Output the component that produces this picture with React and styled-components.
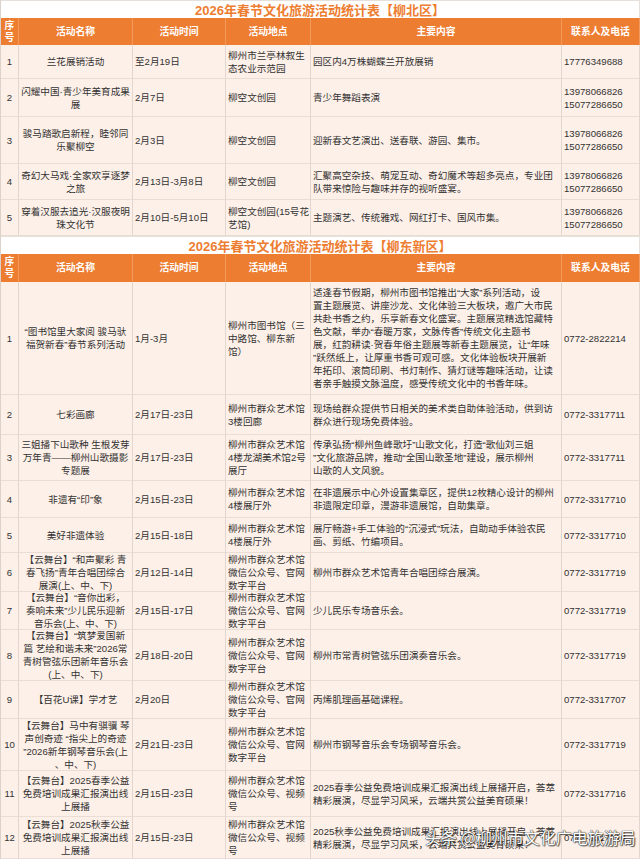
import React from 'react'
import styled, { createGlobalStyle } from 'styled-components'

const GlobalStyle = createGlobalStyle`
    body {
        margin: 0;
        background: #ffffff;
        font-family: "Liberation Sans", "Noto Sans CJK SC", sans-serif;
    }
`

const Page = styled.div`
    position: relative;
    width: 640px;
    height: 860px;
    overflow: hidden;
    background: #ffffff;
`

const Sheet = styled.div`
    display: grid;
    grid-template-columns: 18px 114px 93px 85px 251px 78px;
    width: 640px;
    border-left: 1px solid #ddd2ca;
    box-sizing: border-box;
`

const Title = styled.div`
    grid-column: 1 / -1;
    height: ${p => p.h}px;
    display: flex;
    align-items: center;
    justify-content: center;
    background: #ffffff;
    border-top: 1px solid #e6e0dc;
    border-right: 1px solid #e6e0dc;
    box-sizing: border-box;
    color: #ed7d31;
    font-family: "Liberation Sans", "Noto Sans CJK SC", sans-serif;
    font-size: 13px;
    font-weight: 700;
`

const Head = styled.div`
    height: ${p => p.h}px;
    display: flex;
    align-items: center;
    justify-content: center;
    text-align: center;
    white-space: pre;
    background: #ed7d31;
    color: #ffffff;
    font-size: 9.8px;
    font-weight: 700;
    line-height: 12px;
    border-right: 1px solid #f29a5c;
    box-sizing: border-box;
    &:last-child {
        border-right: none;
    }
`

const Cell = styled.div`
    height: ${p => p.h}px;
    display: flex;
    align-items: center;
    justify-content: ${p => (p.center ? 'center' : 'flex-start')};
    text-align: ${p => (p.center ? 'center' : 'left')};
    padding: 0 ${p => (p.center ? 0 : 1)}px 0 ${p => (p.center ? 0 : 2)}px;
    background: #fdf0e8;
    color: #333333;
    font-size: 9.6px;
    line-height: 13px;
    white-space: pre;
    border-right: 1px solid #e2d6ce;
    border-bottom: 1px solid #eaddd4;
    box-sizing: border-box;
`

const Watermark = styled.div`
    position: absolute;
    left: 425px;
    top: 827px;
    color: #ffffff;
    font-family: "Noto Sans CJK SC", sans-serif;
    font-size: 16px;
    line-height: 20px;
    white-space: nowrap;
    text-shadow: 0 0 1px #222, 0 0 1px #222, 1px 1px 1px rgba(0, 0, 0, 0.6);
`

const heads = ['序\n号', '活动名称', '活动时间', '活动地点', '主要内容', '联系人及电话']

const liubei = [
    [34, '1', '兰花展销活动', '至2月19日', '柳州市兰亭林叙生\n态农业示范园', '园区内4万株蝴蝶兰开放展销', '17776349688'],
    [38, '2', '闪耀中国·青少年美育成果\n展', '2月7日', '柳空文创园', '青少年舞蹈表演', '13978066826\n15077286650'],
    [47, '3', '骏马踏歌启新程，睦邻同\n乐聚柳空', '2月3日', '柳空文创园', '迎新春文艺演出、送春联、游园、集市。', '13978066826\n15077286650'],
    [36, '4', '奇幻大马戏·全家欢享逐梦\n之旅', '2月13日-3月8日', '柳空文创园', '汇聚高空杂技、萌宠互动、奇幻魔术等超多亮点，专业团\n队带来惊险与趣味并存的视听盛宴。', '13978066826\n15077286650'],
    [36, '5', '穿着汉服去追光·汉服夜明\n珠文化节', '2月10日-5月10日', '柳空文创园(15号花\n艺馆)', '主题演艺、传统雅戏、网红打卡、国风市集。', '13978066826\n15077286650'],
]

const qunyi = '柳州市群众艺术馆\n微信公众号、官网\n数字平台'
const qunyiVideo = '柳州市群众艺术馆\n微信公众号、视频\n号'

const liudong = [
    [113, '1', '“图书馆里大家阅 骏马驮\n福贺新春”春节系列活动', '1月-3月', '柳州市图书馆（三\n中路馆、柳东新\n馆）',
        '适逢春节假期，柳州市图书馆推出“大家”系列活动，设\n置主题展览、讲座沙龙、文化体验三大板块，邀广大市民\n共赴书香之约，乐享新春文化盛宴。主题展览精选馆藏特\n色文献，举办“春暖万家，文脉传香”传统文化主题书\n展，红韵耕读·贺春年俗主题展等新春主题展览，让“年味\n”跃然纸上，让厚重书香可观可感。文化体验板块开展新\n年拓印、滚筒印刷、书灯制作、猜灯谜等趣味活动，让读\n者亲手触摸文脉温度，感受传统文化中的书香年味。', '0772-2822214'],
    [40, '2', '七彩画廊', '2月17日-23日', '柳州市群众艺术馆\n3楼回廊', '现场给群众提供节日相关的美术类自助体验活动，供到访\n群众进行现场免费体验。', '0772-3317711'],
    [46, '3', '三姐播下山歌种 生根发芽\n万年青——柳州山歌摄影\n专题展', '2月17日-23日', '柳州市群众艺术馆\n4楼龙湖美术馆2号\n展厅', '传承弘扬“柳州鱼峰歌圩”山歌文化，打造“歌仙刘三姐\n”文化旅游品牌，推动“全国山歌圣地”建设，展示柳州\n山歌的人文风貌。', '0772-3317711'],
    [37, '4', '非遗有“印”象', '2月15日-23日', '柳州市群众艺术馆\n4楼展厅外', '在非遗展示中心外设置集章区，提供12枚精心设计的柳州\n非遗限定印章，漫游非遗展馆，自助集章。', '0772-3317710'],
    [35, '5', '美好非遗体验', '2月15日-18日', '柳州市群众艺术馆\n4楼展厅外', '展厅畅游+手工体验的“沉浸式”玩法，自助动手体验农民\n画、剪纸、竹编项目。', '0772-3317710'],
    [39, '6', '【云舞台】“和声聚彩 青\n春飞扬”青年合唱团综合\n展演(上、中、下)', '2月12日-14日', qunyi, '柳州市群众艺术馆青年合唱团综合展演。', '0772-3317719'],
    [38, '7', '【云舞台】“音你出彩，\n奏响未来”少儿民乐迎新\n音乐会(上、中、下)', '2月15日-17日', qunyi, '少儿民乐专场音乐会。', '0772-3317719'],
    [51, '8', '【云舞台】“筑梦爱国新\n篇 艺绘和谐未来”2026常\n青树管弦乐团新年音乐会\n(上、中、下)', '2月18日-20日', qunyi, '柳州市常青树管弦乐团演奏音乐会。', '0772-3317719'],
    [38, '9', '【百花U课】学才艺', '2月20日', qunyi, '丙烯肌理画基础课程。', '0772-3317707'],
    [52, '10', '【云舞台】马中有骐骥 琴\n声创奇迹 “指尖上的奇迹\n”2026新年钢琴音乐会(上\n、中、下)', '2月21日-23日', qunyi, '柳州市钢琴音乐会专场钢琴音乐会。', '0772-3317719'],
    [46, '11', '【云舞台】2025春季公益\n免费培训成果汇报演出线\n上展播', '2月15日-23日', qunyiVideo, '2025春季公益免费培训成果汇报演出线上展播开启，荟萃\n精彩展演，尽显学习风采，云端共赏公益美育硕果！', '0772-3317716'],
    [42, '12', '【云舞台】2025秋季公益\n免费培训成果汇报演出线\n上展播', '2月15日-23日', qunyiVideo, '2025秋季公益免费培训成果汇报演出线上展播开启，荟萃\n精彩展演，尽显学习风采，云端共赏公益美育硕果！', '0772-3317716'],
]

function Table({ title, headH, rows }) {
    return (
        <>
            <Title h={18}>{title}</Title>
            {heads.map(h => (
                <Head key={h} h={headH}>{h}</Head>
            ))}
            {rows.map(([h, no, name, time, place, content, phone]) => (
                <React.Fragment key={no}>
                    <Cell h={h} center>{no}</Cell>
                    <Cell h={h} center>{name}</Cell>
                    <Cell h={h}>{time}</Cell>
                    <Cell h={h}>{place}</Cell>
                    <Cell h={h}>{content}</Cell>
                    <Cell h={h}>{phone}</Cell>
                </React.Fragment>
            ))}
        </>
    )
}

function App() {
    return (
        <Page>
            <GlobalStyle />
            <Sheet>
                <Table title="2026年春节文化旅游活动统计表【柳北区】" headH={27} rows={liubei} />
                <Table title="2026年春节文化旅游活动统计表【柳东新区】" headH={28} rows={liudong} />
            </Sheet>
            <Watermark>头条 @柳州市文化广电旅游局</Watermark>
        </Page>
    )
}

export default App
